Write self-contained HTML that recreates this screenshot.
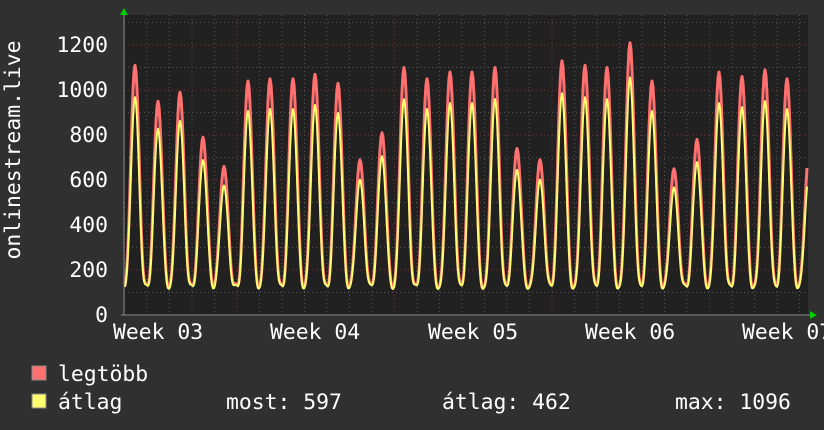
<!DOCTYPE html><html><head><style>
body{margin:0;background:#303030;width:824px;height:430px;overflow:hidden;font-family:"DejaVu Sans Mono","Liberation Mono",monospace;color:#fff}
svg{position:absolute;left:0;top:0}
text{font-family:"DejaVu Sans Mono","Liberation Mono",monospace;fill:#fff;font-size:21.4px}
</style></head><body>
<svg id="s" width="824" height="430" xmlns="http://www.w3.org/2000/svg">
<rect x="124" y="15" width="684" height="300" fill="#212121"/>
<g id="grid"></g>
<polyline id="mx" fill="none" stroke="#ff7070" stroke-width="3" stroke-linejoin="round"/>
<polyline id="av" fill="none" stroke="#ffff70" stroke-width="2" stroke-linejoin="round"/>
<line x1="124" y1="12" x2="124" y2="315" stroke="#888" stroke-width="1"/>
<line x1="121" y1="315" x2="812" y2="315" stroke="#888" stroke-width="1"/>
<polygon points="120,15 128,15 124,8" fill="#0c0"/>
<polygon points="810,311 810,319 817,315" fill="#0c0"/>
<g text-anchor="end">
<text x="108" y="52">1200</text><text x="108" y="97">1000</text><text x="108" y="142">800</text>
<text x="108" y="187">600</text><text x="108" y="232">400</text><text x="108" y="277">200</text><text x="108" y="322">0</text>
</g>
<text x="113" y="339">Week 03</text><text x="270" y="339">Week 04</text><text x="428" y="339">Week 05</text>
<text x="585" y="339">Week 06</text><text x="742" y="339">Week 07</text>
<text transform="translate(20,150) rotate(-90)" text-anchor="middle">onlinestream.live</text>
<rect x="32" y="366" width="14" height="14" fill="#ff7070" stroke="#888"/>
<rect x="32" y="394" width="14" height="14" fill="#ffff70" stroke="#888"/>
<text x="58" y="381">legtöbb</text>
<text x="58" y="409">átlag</text>
<text x="226" y="409">most: 597</text>
<text x="442" y="409">átlag: 462</text>
<text x="675" y="409">max: 1096</text>
</svg>
<script>
var g=document.getElementById("grid"),h="";
for(var v=100;v<=1300;v+=100){var y=315-v*0.225;if(y<15)break;h+='<line x1="124" x2="808" y1="'+y+'" y2="'+y+'" stroke="'+(v%200?'#555':'#6a3a3a')+'" stroke-dasharray="1,3"/>';}
for(var i=0;i<31;i++){var x=124.5+i*22.5;if(x>808)break;var maj=(i%7==5);h+='<line x1="'+x+'" x2="'+x+'" y1="15" y2="315" stroke="'+(maj?'#6a3a3a':'#555')+'" stroke-dasharray="1,3"/>';}
g.innerHTML=h;
var pk=[[135,1110],[158,950],[180,990],[203,790],[224,660],[248,1040],[270,1050],[293,1050],[315,1070],[338,1030],[360,690],[382,810],[404,1100],[427,1050],[450,1080],[472,1080],[495,1100],[517,740],[540,690],[562,1130],[585,1110],[607,1100],[630,1210],[652,1040],[674,650],[697,780],[719,1080],[742,1060],[765,1090],[787,1050],[809,720]];
var m=[],a=[];
for(var x=125;x<=807;x++){var bd=1e9,p=null;for(var k=0;k<pk.length;k++){var d=Math.abs(x-pk[k][0]);if(d<bd){bd=d;p=pk[k];}}
var f=Math.pow((1+Math.cos(Math.PI*Math.min(bd,11.25)/11.25))/2,1.5);
var base=130+10*Math.sin(x*0.7);var vm=base+(p[1]-base)*f;var va=base-5+(p[1]*0.9-base)*f*0.97;
m.push(x+","+(315-vm*0.225).toFixed(1));a.push(x+","+(315-va*0.225).toFixed(1));}
document.getElementById("mx").setAttribute("points",m.join(" "));
document.getElementById("av").setAttribute("points",a.join(" "));
</script>
</body></html>
